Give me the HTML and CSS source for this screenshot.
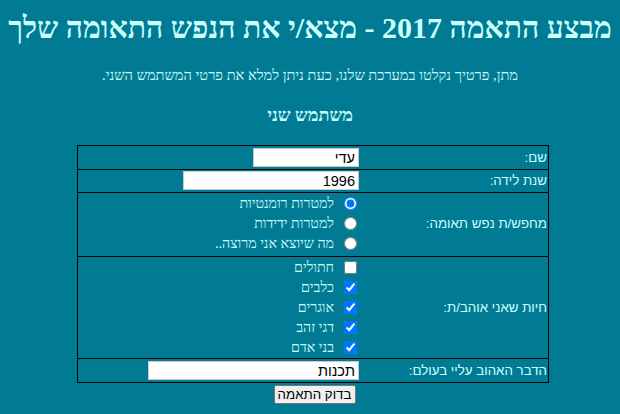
FILE: index.html
```html
<!DOCTYPE html>
<html lang="he" dir="rtl">
<head>
<meta charset="utf-8">
<title>מבצע התאמה 2017</title>
<link rel="stylesheet" href="styles.css">
</head>
<body>
<h1 class="title">מבצע התאמה 2017 - מצא/י את הנפש התאומה שלך</h1>
<p class="intro">מתן, פרטיך נקלטו במערכת שלנו, כעת ניתן למלא את פרטי המשתמש השני.</p>
<h3 class="subtitle">משתמש שני</h3>
<form class="match-form">
<table class="form-table">
<tr class="row row-field">
<td class="label">שם:</td>
<td class="value"><input class="field field-name" type="text" value="עדי"></td>
</tr>
<tr class="row row-field row-tight">
<td class="label">שנת לידה:</td>
<td class="value"><input class="field field-year" type="text" value="1996"></td>
</tr>
<tr class="row row-radios">
<td class="label">מחפש/ת נפש תאומה:</td>
<td class="value">
<label class="opt"><input type="radio" name="purpose" checked><span>למטרות רומנטיות</span></label>
<label class="opt"><input type="radio" name="purpose"><span>למטרות ידידות</span></label>
<label class="opt"><input type="radio" name="purpose"><span>מה שיוצא אני מרוצה..</span></label>
</td>
</tr>
<tr class="row row-checks">
<td class="label">חיות שאני אוהב/ת:</td>
<td class="value">
<label class="opt"><input type="checkbox"><span>חתולים</span></label>
<label class="opt"><input type="checkbox" checked><span>כלבים</span></label>
<label class="opt"><input type="checkbox" checked><span>אוגרים</span></label>
<label class="opt"><input type="checkbox" checked><span>דגי זהב</span></label>
<label class="opt"><input type="checkbox" checked><span>בני אדם</span></label>
</td>
</tr>
<tr class="row row-field">
<td class="label">הדבר האהוב עליי בעולם:</td>
<td class="value"><input class="field field-love" type="text" value="תכנות"></td>
</tr>
</table>
<div class="actions"><button type="button" class="btn">בדוק התאמה</button></div>
</form>
</body>
</html>
```
FILE: styles.css
```css
html, body {
  margin: 0;
  padding: 0;
}
body {
  background: #007b93;
  color: #ccffff;
  font-family: "Liberation Serif", "DejaVu Sans", serif;
  font-size: 13px;
}
.title {
  margin: 9px 0 0;
  text-align: center;
  font-size: 30px;
  font-weight: bold;
  line-height: 37px;
  white-space: nowrap;
}
.intro {
  margin: 21px 0 0;
  text-align: center;
  font-size: 14.6px;
  line-height: 17px;
}
.subtitle {
  margin: 21px 0 0;
  text-align: center;
  font-size: 18px;
  font-weight: bold;
  line-height: 21px;
}
.match-form {
  margin: 19px 0 0;
}
.form-table {
  border-collapse: collapse;
  border: 1px solid #000;
  width: 472px;
  margin: 0 71px 0 auto;
}
.row {
  border-bottom: 1px solid #000;
}
.row td {
  padding: 2px 1px;
}
.row-tight td {
  padding: 1px 1px 2px;
}
.row-radios td {
  padding: 0 1px 3px;
}
.row-checks td {
  padding: 0 1px 1px;
}
.label {
  width: 186px;
  vertical-align: middle;
  font-family: "Liberation Sans", "DejaVu Sans", sans-serif;
  font-size: 13.3px;
  text-align: right;
}
.value {
  vertical-align: top;
  text-align: right;
}
.field {
  box-sizing: border-box;
  height: 19px;
  border: 1px solid #c8c8c8;
  background: #fff;
  color: #000;
  padding: 0 3px;
  margin: 0;
  font-family: "Liberation Sans", "DejaVu Sans", sans-serif;
  font-size: 14.5px;
  direction: rtl;
  outline: none;
}
.field-name { width: 106px; }
.field-year { width: 176px; }
.field-love { width: 211px; }
.opt {
  display: flex;
  align-items: center;
  height: 20px;
}
.opt input {
  width: 13px;
  height: 13px;
  margin: 0 2px 0 10px;
  flex: none;
}
.opt span {
  font-size: 14.2px;
  line-height: 20px;
}
.actions {
  display: flex;
  justify-content: center;
  padding-left: 9px;
  margin-top: 2px;
}
.btn {
  height: 19px;
  width: 82px;
  padding: 0;
  white-space: nowrap;
  font-family: "Liberation Sans", "DejaVu Sans", sans-serif;
  font-size: 13.3px;
  color: #000;
  background: #efefef;
  border: 1px solid #767676;
  border-radius: 2px;
}
```
